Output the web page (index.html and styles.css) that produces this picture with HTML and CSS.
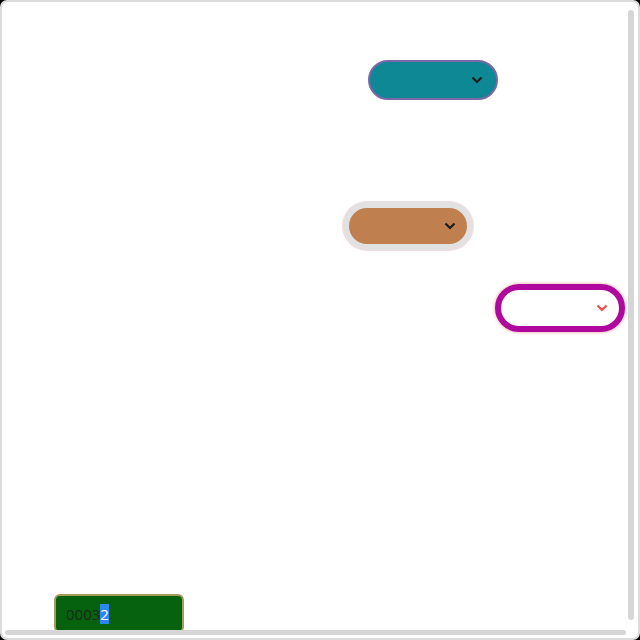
FILE: index.html
```html
<!DOCTYPE html>
<html>
<head>
<meta charset="utf-8">
<link rel="stylesheet" href="styles.css">
</head>
<body>
<div class="frame">
  <div class="sel sel-teal">
    <svg class="chev" width="12" height="8" viewBox="0 0 12 8"><polyline points="1.5,1.5 6,6 10.5,1.5" fill="none" stroke="#1d1d1d" stroke-width="2.2"/></svg>
  </div>
  <div class="sel sel-orange">
    <svg class="chev" width="12" height="8" viewBox="0 0 12 8"><polyline points="1.5,1.5 6,6 10.5,1.5" fill="none" stroke="#1d1d1d" stroke-width="2.2"/></svg>
  </div>
  <div class="sel sel-magenta">
    <svg class="chev" width="12" height="8" viewBox="0 0 12 8"><polyline points="1.5,1.5 6,6 10.5,1.5" fill="none" stroke="#f24a4a" stroke-width="2.2"/></svg>
  </div>
  <div class="field"><span>0003</span><span class="hl">2</span></div>
  <div class="vbar"></div>
  <div class="hbar"></div>
</div>
</body>
</html>
```
FILE: styles.css
```css
html { background: #000; }
body { margin: 0; }
.frame {
  position: relative;
  width: 640px;
  height: 640px;
  box-sizing: border-box;
  border: 2px solid #dcdcdc;
  border-radius: 7px;
  background: #fff;
  overflow: hidden;
  display: flex;
  flex-direction: column;
  align-items: flex-start;
}
.sel {
  box-sizing: border-box;
  width: 130px;
  display: flex;
  align-items: center;
  justify-content: flex-end;
  border-radius: 24px;
}
.sel-teal {
  margin-top: 58px;
  margin-left: 366px;
  height: 40px;
  background: #0e8894;
  border: 2px solid #7b66a8;
  padding-right: 13px;
}
.sel-orange {
  margin-top: 102px;
  margin-left: 341px;
  height: 48px;
  background: #c07f4e;
  border: 6px solid #e1e1e1;
  box-shadow: 0 0 0 1px rgba(230, 150, 170, 0.35);
  padding-right: 11px;
}
.sel-magenta {
  margin-top: 34px;
  margin-left: 493px;
  height: 48px;
  background: #fff;
  border: 6px solid #b0089e;
  box-shadow: 0 0 3px 1px rgba(220, 120, 110, 0.45);
  padding-right: 11px;
}
.field {
  margin-top: 262px;
  margin-left: 52px;
  box-sizing: border-box;
  width: 130px;
  height: 39px;
  background: #06620f;
  border: 2px solid #a89a5a;
  border-radius: 6px;
  padding-left: 10px;
  display: flex;
  align-items: center;
  font-family: "Open Sans", sans-serif;
  font-size: 15px;
  color: #1a2a1a;
}
.hl {
  background: #2e86f0;
  color: #fff;
}
.vbar {
  position: absolute;
  left: 626px;
  top: 8px;
  width: 6px;
  height: 610px;
  border-radius: 3px;
  background: #d6d6d6;
}
.hbar {
  position: absolute;
  left: 3px;
  top: 628px;
  width: 621px;
  height: 5px;
  border-radius: 3px;
  background: #d6d6d6;
}
```
